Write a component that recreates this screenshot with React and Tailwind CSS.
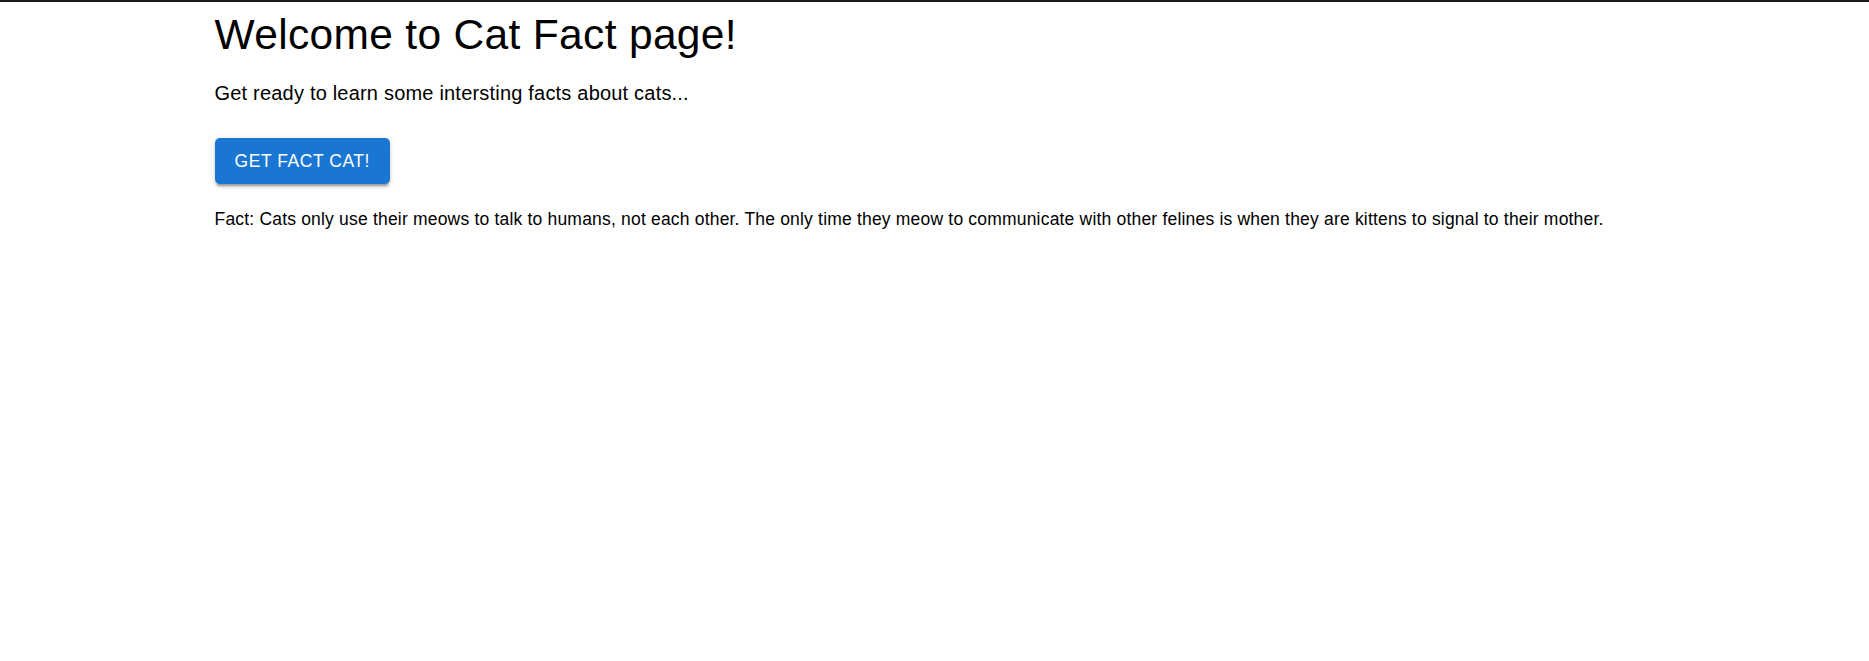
import { useState } from 'react'

const FACT =
  'Cats only use their meows to talk to humans, not each other. The only time they meow to communicate with other felines is when they are kittens to signal to their mother.'

const App = () => {
  const [fact] = useState(FACT)

  return (
    <div className="min-h-screen bg-white border-t-2 border-[#1a1a1a] font-['Liberation_Sans',Arial,sans-serif] text-black">
      <div className="mx-auto max-w-[1500px] px-[30px]">
        <h1 className="mt-[7px] text-[42.5px] leading-[52.5px] tracking-[0.33px] font-normal">Welcome to Cat Fact page!</h1>
        <p className="mt-[16.5px] text-[20px] leading-[30px] tracking-[0.2px]">
          Get ready to learn some intersting facts about cats...
        </p>

        <button
          type="button"
          className="mt-[30px] h-[45.5px] px-[20px] rounded-[5px] bg-[#1976d2] text-white uppercase font-normal text-[17.5px] tracking-[0.55px] shadow-[0px_3.75px_1.25px_-2.5px_rgba(0,0,0,0.2),0px_2.5px_2.5px_0px_rgba(0,0,0,0.14),0px_1.25px_6.25px_0px_rgba(0,0,0,0.12)]"
        >
          Get fact cat!
        </button>

        <p className="mt-[22px] text-[17.5px] leading-[26.25px] tracking-[0.19px]">Fact: {fact}</p>
      </div>
    </div>
  )
}

export default App
